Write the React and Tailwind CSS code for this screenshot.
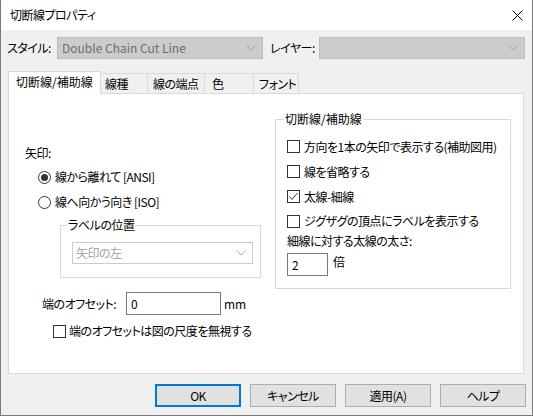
import React from "react";

const Chevron = ({ color = "#a0a0a0" }) => (
  <svg width="10" height="6" viewBox="0 0 10 6" className="shrink-0">
    <polyline points="0.5,0.5 5,5 9.5,0.5" fill="none" stroke={color} strokeWidth="1" />
  </svg>
);

const Check = ({ checked }) => (
  <span className="w-[13px] h-[13px] border border-[#333333] bg-white shrink-0 flex items-center justify-center">
    {checked && (
      <svg width="11" height="11" viewBox="0 0 11 11">
        <polyline points="1.5,5.5 4,8.5 9.5,2" fill="none" stroke="#333333" strokeWidth="1" />
      </svg>
    )}
  </span>
);

const Radio = ({ checked }) => (
  <span className="w-[13px] h-[13px] rounded-full border border-[#333333] bg-white shrink-0 flex items-center justify-center">
    {checked && <span className="w-[7px] h-[7px] rounded-full bg-[#333333]" />}
  </span>
);

const Button = ({ children, primary }) => (
  <div
    className={
      "w-[86px] h-[23px] bg-[#e1e1e1] flex items-center justify-center " +
      (primary ? "border-2 border-[#0078d7]" : "border border-[#adadad]")
    }
  >
    {children}
  </div>
);

export default function App() {
  return (
    <div
      className="w-[533px] h-[417px] bg-white text-[12px] leading-[16px] tracking-[-0.5px] text-black [font-feature-settings:'palt']"
      style={{ fontFamily: '"Noto Sans CJK JP", "Noto Sans", sans-serif' }}
    >
      <div className="h-[416px] flex flex-col border-x border-b border-[#7a7a7a]">
        {/* Title bar */}
        <div className="h-[30px] bg-white flex items-center pl-[9px] pr-[9px] justify-between shrink-0">
          <span>切断線プロパティ</span>
          <svg width="11" height="11" viewBox="0 0 11 11">
            <line x1="0.5" y1="0.5" x2="10.5" y2="10.5" stroke="#000" strokeWidth="1" />
            <line x1="10.5" y1="0.5" x2="0.5" y2="10.5" stroke="#000" strokeWidth="1" />
          </svg>
        </div>

        {/* Body */}
        <div className="flex-1 bg-[#f0f0f0] flex flex-col">
          {/* Style row */}
          <div className="mt-[7px] h-[22px] flex items-center pl-[6px]">
            <span className="w-[50px] whitespace-nowrap">スタイル:</span>
            <div className="w-[206px] h-[22px] bg-[#cccccc] border border-[#bfbfbf] flex items-center justify-between pl-[4px] pr-[6px] text-[#6d6d6d] tracking-normal">
              <span className="whitespace-nowrap">Double Chain Cut Line</span>
              <Chevron />
            </div>
            <span className="ml-[7px] w-[49px] whitespace-nowrap">レイヤー:</span>
            <div className="w-[206px] h-[22px] bg-[#cccccc] border border-[#bfbfbf] flex items-center justify-end pr-[6px]">
              <Chevron />
            </div>
          </div>

          {/* Tabs */}
          <div className="mt-[12px] h-[22px] flex items-end pl-[7px]">
            <div className="relative z-10 -mb-px w-[93px] h-[23px] bg-white border-x border-t border-[#d9d9d9] flex items-center pl-[7px] pb-[3px] whitespace-nowrap tracking-normal">
              切断線/補助線
            </div>
            <div className="w-[47px] h-[20px] border-t border-r border-[#d9d9d9] flex items-center pl-[4px] whitespace-nowrap">
              線種
            </div>
            <div className="w-[57px] h-[20px] border-t border-r border-[#d9d9d9] flex items-center pl-[5px] whitespace-nowrap">
              線の端点
            </div>
            <div className="w-[49px] h-[20px] border-t border-r border-[#d9d9d9] flex items-center pl-[7px] whitespace-nowrap">
              色
            </div>
            <div className="w-[45px] h-[20px] border-t border-r border-[#d9d9d9] flex items-center pl-[5px] whitespace-nowrap">
              フォント
            </div>
          </div>

          {/* Panel */}
          <div className="ml-[7px] w-[516px] h-[281px] bg-white border border-[#d9d9d9] flex">
            {/* Left column */}
            <div className="w-[266px] flex flex-col">
              <div className="mt-[49px] h-[20px] flex items-center pl-[16px]">矢印:</div>
              <div className="mt-[2px] h-[24px] flex items-center pl-[29px] gap-[4px] whitespace-nowrap">
                <Radio checked />
                <span>線から離れて [ANSI]</span>
              </div>
              <div className="mt-[1px] h-[24px] flex items-center pl-[29px] gap-[4px] whitespace-nowrap">
                <Radio />
                <span>線へ向かう向き [ISO]</span>
              </div>
              <fieldset className="mt-[3px] ml-[51px] w-[201px] border border-[#d9d9d9] pb-[13px]">
                <legend className="ml-[6px] px-[1px]">ラベルの位置</legend>
                <div className="mt-[9px] ml-[11px] w-[181px] h-[22px] border border-[#cccccc] bg-white flex items-center justify-between pl-[3px] pr-[6px] text-[#a6a6a6]">
                  <span>矢印の左</span>
                  <Chevron color="#b0b0b0" />
                </div>
              </fieldset>
              <div className="mt-[14px] h-[23px] flex items-center pl-[33px]">
                <span className="w-[84px] whitespace-nowrap">端のオフセット:</span>
                <div className="w-[95px] h-[23px] border border-[#7a7a7a] bg-white flex items-center pl-[4px]">0</div>
                <span className="ml-[3px] tracking-normal">mm</span>
              </div>
              <div className="mt-[6px] h-[20px] flex items-center pl-[44px] gap-[3px] whitespace-nowrap">
                <Check />
                <span>端のオフセットは図の尺度を無視する</span>
              </div>
            </div>

            {/* Right column */}
            <fieldset className="mt-[17px] self-start w-[236px] border border-[#d9d9d9] pb-[12px]">
              <legend className="ml-[8px] px-[1px] tracking-normal">切断線/補助線</legend>
              <div className="mt-[7px] pl-[11px] flex flex-col">
                <div className="h-[25px] flex items-center gap-[4px] whitespace-nowrap">
                  <Check />
                  <span>方向を1本の矢印で表示する(補助図用)</span>
                </div>
                <div className="h-[25px] flex items-center gap-[4px] whitespace-nowrap">
                  <Check />
                  <span>線を省略する</span>
                </div>
                <div className="h-[25px] flex items-center gap-[4px] whitespace-nowrap">
                  <Check checked />
                  <span>太線-細線</span>
                </div>
                <div className="h-[24px] flex items-center gap-[4px] whitespace-nowrap">
                  <Check />
                  <span>ジグザグの頂点にラベルを表示する</span>
                </div>
                <div className="h-[16px] flex items-center whitespace-nowrap">細線に対する太線の太さ:</div>
                <div className="mt-[4px] flex items-start">
                  <div className="w-[41px] h-[23px] border border-[#7a7a7a] bg-white flex items-center pl-[4px]">2</div>
                  <span className="ml-[5px] mt-[1px]">倍</span>
                </div>
              </div>
            </fieldset>
          </div>

          {/* Buttons */}
          <div className="mt-[10px] flex justify-end pr-[6px] gap-[9px]">
            <Button primary>OK</Button>
            <Button>キャンセル</Button>
            <Button>適用(A)</Button>
            <Button>ヘルプ</Button>
          </div>
        </div>
      </div>
    </div>
  );
}
